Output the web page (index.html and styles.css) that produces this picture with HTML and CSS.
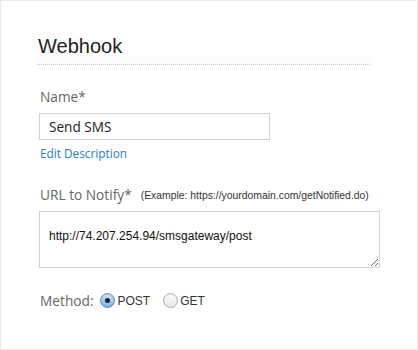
FILE: index.html
```html
<!DOCTYPE html>
<html lang="en">
<head>
    <meta charset="UTF-8">
    <meta name="viewport" content="width=device-width, initial-scale=1.0">
    <title>Webhook</title>
    <link rel="stylesheet" href="styles.css">
</head>
<body>
    <div class="panel">
        <!-- Section title -->
        <h2 class="panel-title">Webhook</h2>

        <!-- Name field -->
        <label class="field-label name-label" for="name">Name*</label>
        <input class="text-input" id="name" type="text" value="Send SMS">
        <a class="edit-link" href="#">Edit Description</a>

        <!-- URL field -->
        <div class="url-label">
            <label class="field-label" for="url">URL to Notify*</label>
            <span class="hint">(Example: https://yourdomain.com/getNotified.do)</span>
        </div>
        <textarea class="url-input" id="url">http://74.207.254.94/smsgateway/post</textarea>

        <!-- Method -->
        <div class="method-row">
            <span class="field-label">Method:</span>
            <label class="radio post">
                <input type="radio" name="method" checked>
                <span>POST</span>
            </label>
            <label class="radio">
                <input type="radio" name="method">
                <span>GET</span>
            </label>
        </div>
    </div>
</body>
</html>
```

FILE: styles.css
```css
/* Page */
body {
    margin: 0;
    background-color: #ffffff;
    font-family: "Open Sans", Arial, sans-serif;
}

/* Outer panel */
.panel {
    box-sizing: border-box;
    width: 418px;
    height: 350px;
    border: 1px solid #e8e8e8;
    padding: 33px 0 0 36px;
}

/* Title with dotted rule */
.panel-title {
    width: 332px;
    margin: 0;
    padding: 0 0 6px 1px;
    font-family: "Liberation Sans", Arial, sans-serif;
    font-size: 20px;
    font-weight: normal;
    line-height: 24px;
    color: #222222;
    background: linear-gradient(to bottom, #ffffff, #fcfcfc);
    border-bottom: 1px dotted #c8c8c8;
}

/* Labels */
.field-label {
    font-size: 13.7px;
    line-height: 19px;
    color: #666666;
}

.name-label {
    display: block;
    margin: 22px 0 7px 3px;
}

/* Name input */
.text-input {
    display: block;
    box-sizing: border-box;
    width: 231px;
    height: 27px;
    margin: 0 0 0 2px;
    padding: 0 9px;
    border: 1px solid #d2d2d2;
    border-radius: 0;
    font-family: "Open Sans", Arial, sans-serif;
    font-size: 13.6px;
    color: #222222;
    outline: none;
}

.edit-link {
    display: block;
    margin: 5px 0 0 3px;
    font-size: 11.8px;
    line-height: 16px;
    color: #2280c8;
    text-decoration: none;
}

/* URL field */
.url-label {
    display: flex;
    align-items: center;
    gap: 9px;
    margin: 24px 0 7px 3px;
}

.hint {
    padding-top: 1px;
    font-family: "Liberation Sans", Arial, sans-serif;
    font-size: 10.4px;
    color: #333333;
}

.url-input {
    display: block;
    box-sizing: border-box;
    width: 341px;
    height: 57px;
    margin: 0 0 0 2px;
    padding: 17px 9px 0;
    border: 1px solid #d2d2d2;
    border-radius: 0;
    font-family: "Liberation Sans", Arial, sans-serif;
    font-size: 12px;
    line-height: 14px;
    color: #111111;
    outline: none;
}

/* Method radios */
.method-row {
    display: flex;
    align-items: center;
    margin: 23px 0 0 3px;
}

.radio {
    display: flex;
    align-items: center;
    gap: 2px;
    margin-left: 7px;
    font-family: "Liberation Sans", Arial, sans-serif;
    font-size: 12px;
    color: #333333;
}

.radio.post {
    margin-right: 6px;
}

.radio input {
    appearance: none;
    -webkit-appearance: none;
    position: relative;
    box-sizing: border-box;
    width: 15px;
    height: 15px;
    margin: 0;
    border: 1px solid #a9a9a9;
    border-radius: 50%;
    background: linear-gradient(to bottom, #ffffff, #e6e6e6);
    box-shadow: inset 0 1px 1px rgba(0, 0, 0, 0.08);
}

.radio input:checked {
    border-color: #5a86c0;
    background: linear-gradient(to bottom, #d2e4f8, #7fb1e8);
}

.radio input:checked::after {
    content: "";
    position: absolute;
    top: 4px;
    left: 4px;
    width: 5px;
    height: 5px;
    border-radius: 50%;
    background-color: #1c2430;
}
```
